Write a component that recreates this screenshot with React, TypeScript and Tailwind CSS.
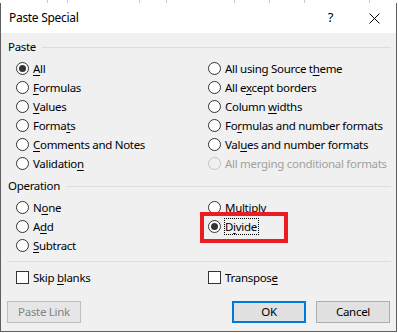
import type { ReactNode } from "react";
import clsx from "clsx";

const K = ({ children }: { children: ReactNode }) => (
  <span className="underline decoration-1 underline-offset-[2px]">{children}</span>
);

const Radio = ({
  label,
  checked,
  disabled,
  focus,
}: {
  label: ReactNode;
  checked?: boolean;
  disabled?: boolean;
  focus?: boolean;
}) => (
  <div className="flex h-[19px] items-center gap-[4px] whitespace-nowrap">
    <span
      className={clsx(
        "flex size-[13px] shrink-0 items-center justify-center rounded-full border",
        disabled ? "border-[#c4c4c4] bg-[#f0f0f0]" : "border-[#333333] bg-white",
      )}
    >
      {checked && <span className="size-[7px] rounded-full bg-[#333333]" />}
    </span>
    <span
      className={clsx(
        "leading-[15px]",
        disabled ? "text-[#a0a0a0]" : "text-black",
        focus && "-ml-px border border-dotted border-black pr-px",
      )}
    >
      {label}
    </span>
  </div>
);

const Check = ({ label }: { label: ReactNode }) => (
  <div className="flex h-[19px] items-center gap-[4px] whitespace-nowrap">
    <span className="size-[13px] shrink-0 border border-[#333333] bg-white" />
    <span>{label}</span>
  </div>
);

const GroupTitle = ({ children }: { children: ReactNode }) => (
  <div className="flex h-[16px] items-center gap-[6px] pl-[7px] pr-[5px]">
    <span>{children}</span>
    <div className="h-px flex-1 bg-[#dcdcdc]" />
  </div>
);

export default function App() {
  return (
    <div className="h-[333px] w-[398px] overflow-hidden bg-white font-['Noto_Sans',sans-serif] text-[11.5px] tracking-[-0.3px] text-black">
      {/* sheet behind the dialog */}
      <div className="flex h-[3px]">
        <div className="w-[48px] border-r border-[#c8c8c8]" />
        <div className="w-[20px] border-r border-[#c8c8c8]" />
        <div className="w-[72px] border-r border-[#c8c8c8]" />
        <div className="w-[27px] border-r border-[#c8c8c8]" />
        <div className="w-[68px] border-r border-[#c8c8c8]" />
        <div className="w-[35px] border-r border-[#c8c8c8]" />
        <div className="w-[35px] border-r border-[#c8c8c8]" />
        <div className="w-[65px] border-r border-[#c8c8c8]" />
      </div>

      <div className="relative flex h-[329px] w-[397px] flex-col border-x border-b border-[#5f5f5f]">
        {/* title bar */}
        <div className="flex h-[30px] shrink-0 items-center bg-white pl-[8px]">
          <span className="flex-1 text-[12px]">Paste Special</span>
          <span className="mr-[36px] text-[13px]">?</span>
          <svg width="11" height="11" viewBox="0 0 11 11" className="mr-[16px]">
            <path d="M0.5 0.5 L10.5 10.5 M10.5 0.5 L0.5 10.5" stroke="#000" strokeWidth="1" />
          </svg>
        </div>

        {/* body */}
        <div className="flex flex-1 flex-col bg-[#f0f0f0]">
          <div className="mt-[6px]">
            <GroupTitle>Paste</GroupTitle>
          </div>
          <div className="mt-[4px] grid grid-cols-[192px_1fr] pl-[15px]">
            <div>
              <Radio checked label={<><K>A</K>ll</>} />
              <Radio label={<><K>F</K>ormulas</>} />
              <Radio label={<><K>V</K>alues</>} />
              <Radio label={<>Forma<K>t</K>s</>} />
              <Radio label={<><K>C</K>omments and Notes</>} />
              <Radio label={<>Validatio<K>n</K></>} />
            </div>
            <div>
              <Radio label={<>All using Source t<K>h</K>eme</>} />
              <Radio label={<>All e<K>x</K>cept borders</>} />
              <Radio label={<>Column <K>w</K>idths</>} />
              <Radio label={<>Fo<K>r</K>mulas and number formats</>} />
              <Radio label={<>Val<K>u</K>es and number formats</>} />
              <Radio disabled label="All merging conditional formats" />
            </div>
          </div>

          <div className="mt-[5px]">
            <GroupTitle>Operation</GroupTitle>
          </div>
          <div className="mt-[4px] grid grid-cols-[192px_1fr] pl-[15px]">
            <div>
              <Radio label={<>N<K>o</K>ne</>} />
              <Radio label={<>A<K>d</K>d</>} />
              <Radio label={<><K>S</K>ubtract</>} />
            </div>
            <div>
              <Radio label={<><K>M</K>ultiply</>} />
              <Radio checked focus label={<>D<K>i</K>vide</>} />
            </div>
          </div>

          <div className="ml-[6px] mr-[5px] mt-[6px] h-px bg-[#dcdcdc]" />

          <div className="mt-[6px] grid grid-cols-[192px_1fr] pl-[15px]">
            <Check label={<>Skip <K>b</K>lanks</>} />
            <Check label={<>Transpos<K>e</K></>} />
          </div>

          <div className="mt-[14px] flex items-center pl-[6px] pr-[6px]">
            <button className="h-[22px] w-[74px] border border-[#bfbfbf] bg-[#e6e6e6] text-[#838383]">
              Paste Link
            </button>
            <div className="flex-1" />
            <button className="h-[22px] w-[74px] border-2 border-[#0078d7] bg-[#e1e1e1]">OK</button>
            <button className="ml-[10px] h-[22px] w-[74px] border border-[#adadad] bg-[#e1e1e1]">
              Cancel
            </button>
          </div>
        </div>

        {/* red annotation box */}
        <div className="absolute left-[199px] top-[209px] h-[31px] w-[88px] border-4 border-[#ec1c24]" />
      </div>
    </div>
  );
}
